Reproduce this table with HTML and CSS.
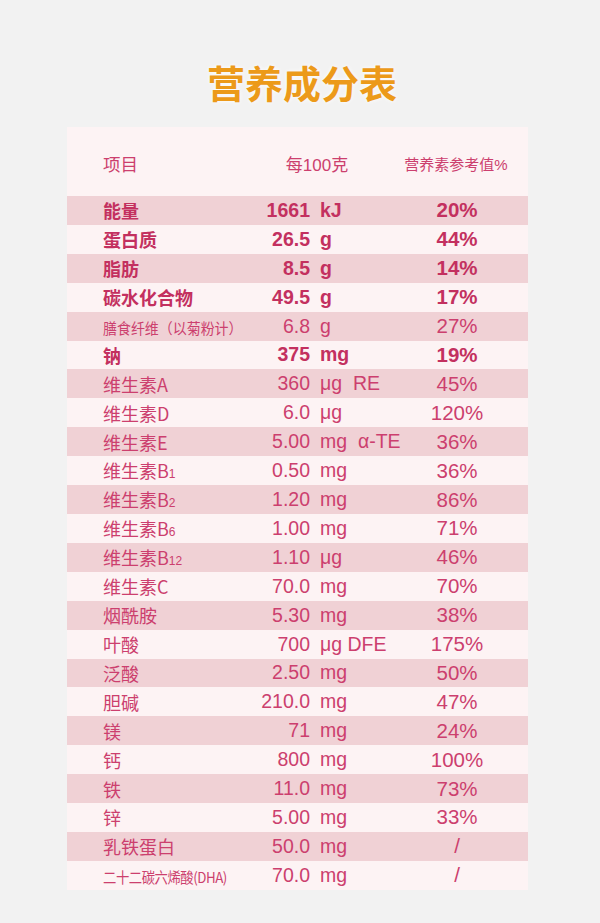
FILE: index.html
```html
<!DOCTYPE html>
<html lang="zh">
<head>
<meta charset="utf-8">
<title>营养成分表</title>
<link rel="stylesheet" href="styles.css">
</head>
<body>
<div class="page">
  <h1 class="title">营养成分表</h1>
  <div class="panel">
    <div class="head">
      <span class="h-name">项目</span>
      <span class="h-mid">每100克</span>
      <span class="h-pct">营养素参考值%</span>
    </div>
    <div class="row dark bold"><span class="name">能量</span><span class="val">1661</span><span class="unit">kJ</span><span class="pct">20%</span></div>
    <div class="row bold"><span class="name">蛋白质</span><span class="val">26.5</span><span class="unit">g</span><span class="pct">44%</span></div>
    <div class="row dark bold"><span class="name">脂肪</span><span class="val">8.5</span><span class="unit">g</span><span class="pct">14%</span></div>
    <div class="row bold"><span class="name">碳水化合物</span><span class="val">49.5</span><span class="unit">g</span><span class="pct">17%</span></div>
    <div class="row dark"><span class="name"><span class="narrow">膳食纤维（以菊粉计）</span></span><span class="val">6.8</span><span class="unit">g</span><span class="pct">27%</span></div>
    <div class="row bold"><span class="name">钠</span><span class="val">375</span><span class="unit">mg</span><span class="pct">19%</span></div>
    <div class="row dark"><span class="name">维生素A</span><span class="val">360</span><span class="unit">μg&nbsp;&nbsp;RE</span><span class="pct">45%</span></div>
    <div class="row"><span class="name">维生素D</span><span class="val">6.0</span><span class="unit">μg</span><span class="pct">120%</span></div>
    <div class="row dark"><span class="name">维生素E</span><span class="val">5.00</span><span class="unit">mg&nbsp;&nbsp;α-TE</span><span class="pct">36%</span></div>
    <div class="row"><span class="name">维生素B<span class="sub">1</span></span><span class="val">0.50</span><span class="unit">mg</span><span class="pct">36%</span></div>
    <div class="row dark"><span class="name">维生素B<span class="sub">2</span></span><span class="val">1.20</span><span class="unit">mg</span><span class="pct">86%</span></div>
    <div class="row"><span class="name">维生素B<span class="sub">6</span></span><span class="val">1.00</span><span class="unit">mg</span><span class="pct">71%</span></div>
    <div class="row dark"><span class="name">维生素B<span class="sub">12</span></span><span class="val">1.10</span><span class="unit">μg</span><span class="pct">46%</span></div>
    <div class="row"><span class="name">维生素C</span><span class="val">70.0</span><span class="unit">mg</span><span class="pct">70%</span></div>
    <div class="row dark"><span class="name">烟酰胺</span><span class="val">5.30</span><span class="unit">mg</span><span class="pct">38%</span></div>
    <div class="row"><span class="name">叶酸</span><span class="val">700</span><span class="unit">μg DFE</span><span class="pct">175%</span></div>
    <div class="row dark"><span class="name">泛酸</span><span class="val">2.50</span><span class="unit">mg</span><span class="pct">50%</span></div>
    <div class="row"><span class="name">胆碱</span><span class="val">210.0</span><span class="unit">mg</span><span class="pct">47%</span></div>
    <div class="row dark"><span class="name">镁</span><span class="val">71</span><span class="unit">mg</span><span class="pct">24%</span></div>
    <div class="row"><span class="name">钙</span><span class="val">800</span><span class="unit">mg</span><span class="pct">100%</span></div>
    <div class="row dark"><span class="name">铁</span><span class="val">11.0</span><span class="unit">mg</span><span class="pct">73%</span></div>
    <div class="row"><span class="name">锌</span><span class="val">5.00</span><span class="unit">mg</span><span class="pct">33%</span></div>
    <div class="row dark"><span class="name">乳铁蛋白</span><span class="val">50.0</span><span class="unit">mg</span><span class="pct">/</span></div>
    <div class="row"><span class="name"><span class="small">二十二碳六烯酸(DHA)</span></span><span class="val">70.0</span><span class="unit">mg</span><span class="pct">/</span></div>
  </div>
</div>
</body>
</html>
```

FILE: styles.css
```css
html, body {
  margin: 0;
  padding: 0;
  background: #f2f2f2;
}

.page {
  width: 600px;
  height: 923px;
  overflow: hidden;
  font-family: "Liberation Sans", "Noto Sans CJK SC", sans-serif;
  color: #cc3f6e;
}

.title {
  margin: 0;
  padding-top: 63px;
  height: 38px;
  line-height: 38px;
  font-size: 38px;
  font-weight: 700;
  text-align: center;
  color: #ec9a1a;
  font-family: "Noto Sans CJK SC", sans-serif;
  text-shadow: 0 0 4px rgba(255, 255, 255, 0.95);
  padding-left: 4px;
}

.panel {
  margin: 26px 0 0 67px;
  width: 461px;
  background: #fdf3f4;
}

.head {
  height: 69px;
  display: grid;
  grid-template-columns: 133px 162px 116px;
  align-items: center;
  padding: 4px 14px 0 36px;
  box-sizing: border-box;
  font-family: "Noto Sans CJK SC", "Liberation Sans", sans-serif;
}

.h-name {
  font-size: 17.5px;
}

.h-mid {
  font-size: 17px;
  text-align: center;
  font-family: "Liberation Sans", "Noto Sans CJK SC", sans-serif;
}

.h-pct {
  font-size: 15px;
  text-align: center;
  font-family: "Liberation Sans", "Noto Sans CJK SC", sans-serif;
}

.row {
  height: 28.92px;
  display: grid;
  grid-template-columns: 150px 57px 90px 114px;
  align-items: center;
  padding: 0 14px 0 36px;
  white-space: nowrap;
  background: #fdf3f4;
}

.row.dark {
  background: #f0d1d5;
}

.row.bold {
  font-weight: 700;
  color: #c3305f;
}

.name {
  font-size: 18px;
  font-family: "Noto Sans CJK SC", "Liberation Sans", sans-serif;
  line-height: 1;
}

.name .sub {
  font-size: 12px;
  font-family: "Liberation Sans", sans-serif;
}

.narrow {
  display: inline-block;
  font-size: 15px;
  transform: scaleX(0.93);
  transform-origin: left center;
}

.small {
  display: inline-block;
  font-size: 14.5px;
  transform: scaleX(0.92);
  transform-origin: left center;
  letter-spacing: -0.5px;
}

.val {
  font-size: 19.5px;
  text-align: right;
}

.unit {
  font-size: 19.5px;
  padding-left: 10px;
  overflow: visible;
}

.pct {
  font-size: 20.5px;
  text-align: center;
}
```
